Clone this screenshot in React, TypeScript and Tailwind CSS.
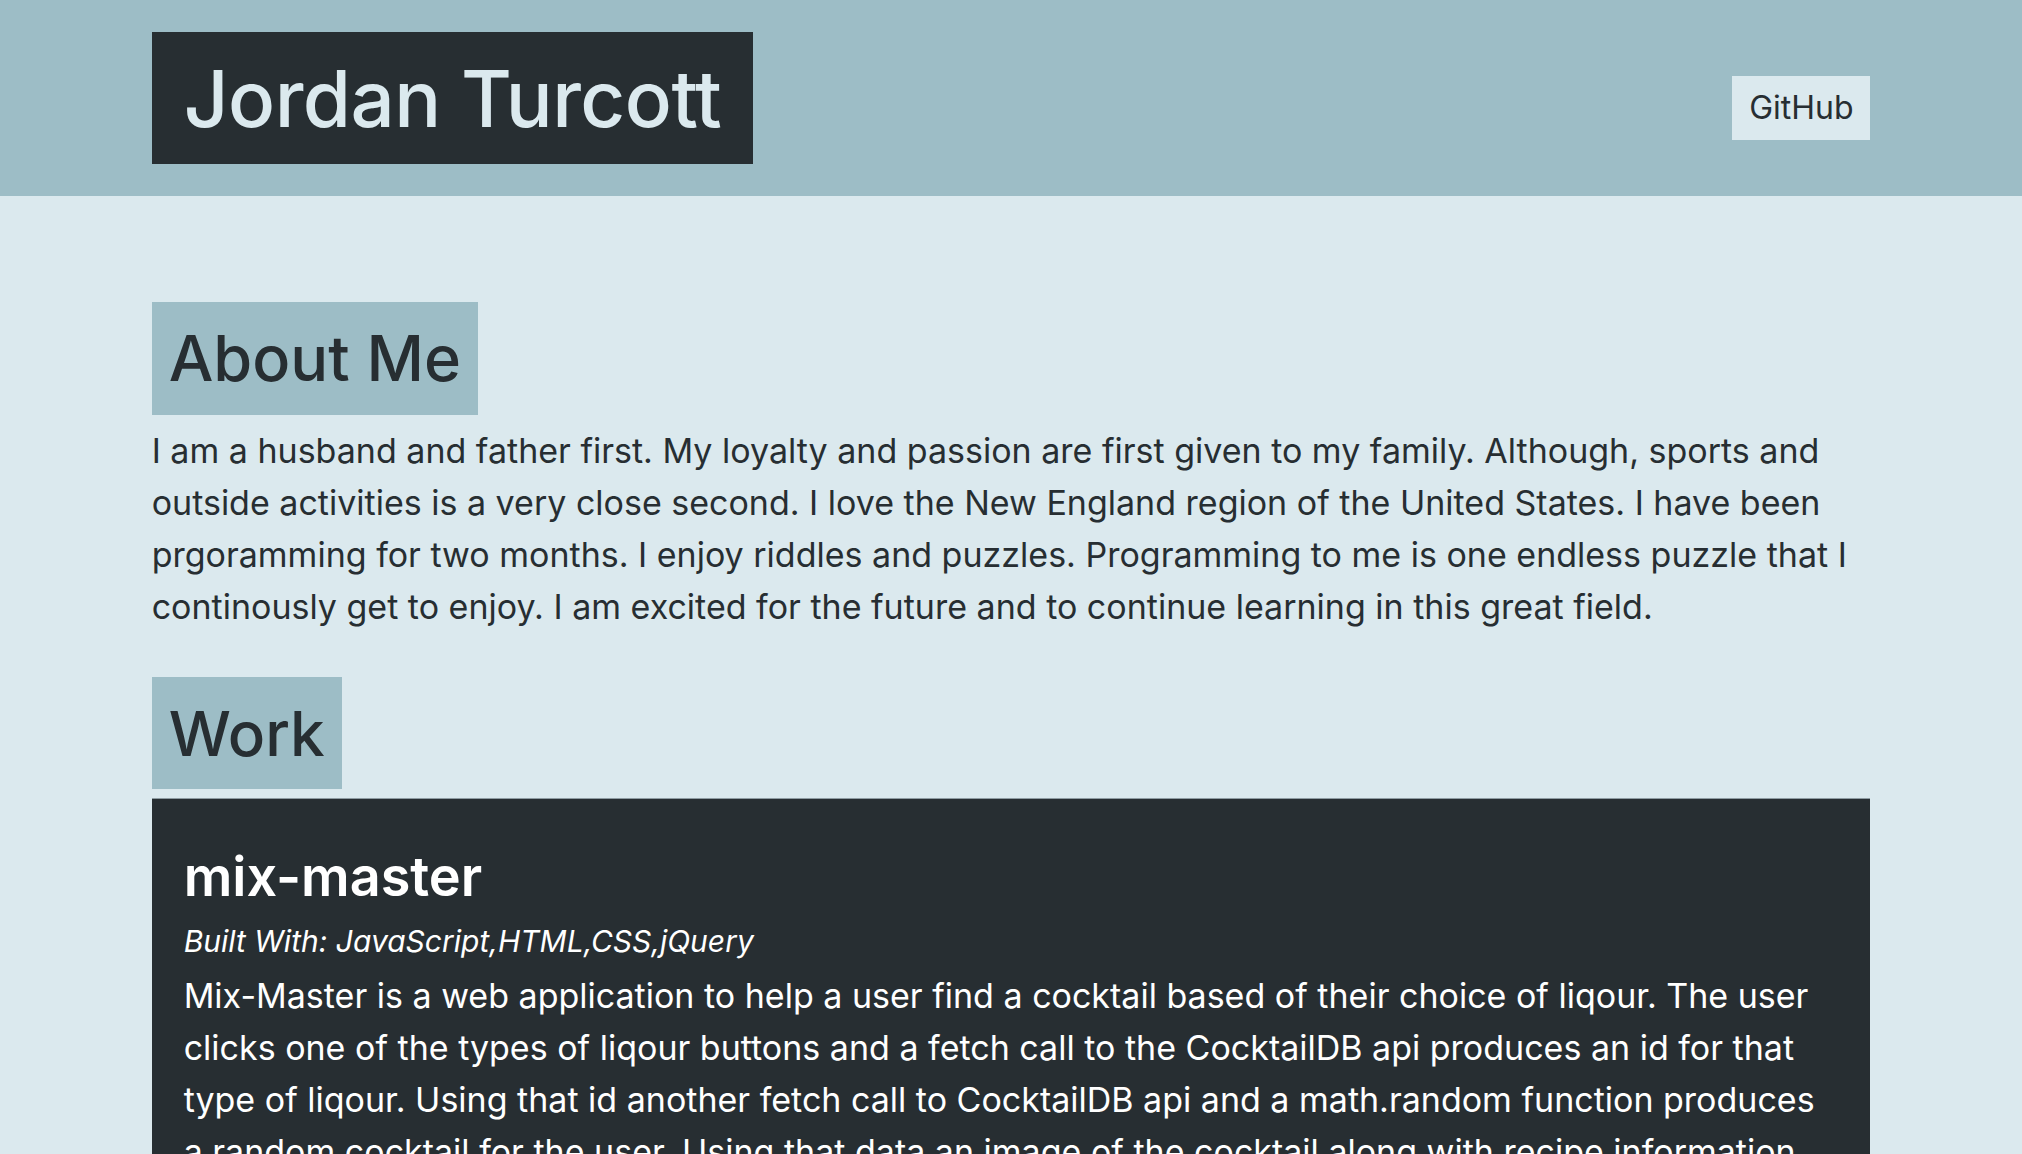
export default function App() {
  const font = { fontFamily: "Inter, 'Noto Sans', sans-serif" };

  return (
    <div className="min-h-[1154px] bg-[#dbe9ee] text-[#272e32]" style={font}>
      <header className="bg-[#9dbdc6] h-[196px]">
        <div className="w-[85%] mx-auto flex justify-between items-start">
          <h1 className="mt-[32px] h-[132px] px-[32px] flex items-center bg-[#272e32] text-[#dbe9ee] text-[78px] font-medium tracking-[-0.5px]">
            Jordan Turcott
          </h1>
          <a
            href="#"
            className="mt-[76px] h-[64px] w-[138px] flex items-center justify-center bg-[#dbe9ee] text-[#272e32] text-[32px]"
          >
            GitHub
          </a>
        </div>
      </header>

      <main className="w-[85%] mx-auto pt-[106px]">
        <section>
          <h2 className="inline-flex items-center h-[113px] px-[17px] bg-[#9dbdc6] text-[63px] font-medium">
            About Me
          </h2>
          <p className="mt-[10px] text-[34px] leading-[52px]">
            I am a husband and father first. My loyalty and passion are first given to my family. Although, sports and
            outside activities is a very close second. I love the New England region of the United States. I have been
            prgoramming for two months. I enjoy riddles and puzzles. Programming to me is one endless puzzle that I
            continously get to enjoy. I am excited for the future and to continue learning in this great field.
          </p>
        </section>

        <section className="mt-[44px]">
          <h2 className="inline-flex items-center h-[112px] px-[17px] bg-[#9dbdc6] text-[62px] font-medium">
            Work
          </h2>
          <article className="mt-[9px] bg-[#272e32] border-t border-[#8e9ca2] text-white px-[32px] pt-[42px] pb-[40px]">
            <h3 className="text-[54px] font-semibold leading-[72px]">mix-master</h3>
            <p className="mt-[5px] text-[30px] italic leading-[46px]">Built With: JavaScript,HTML,CSS,jQuery</p>
            <p className="mt-[6px] text-[34px] leading-[52px]">
              Mix-Master is a web application to help a user find a cocktail based of their choice of liqour. The user
              clicks one of the types of liqour buttons and a fetch call to the CocktailDB api produces an id for that
              type of liqour. Using that id another fetch call to CocktailDB api and a math.random function produces a
              random cocktail for the user. Using that data an image of the cocktail along with recipe information
              appears on the page.
            </p>
          </article>
        </section>
      </main>
    </div>
  );
}
